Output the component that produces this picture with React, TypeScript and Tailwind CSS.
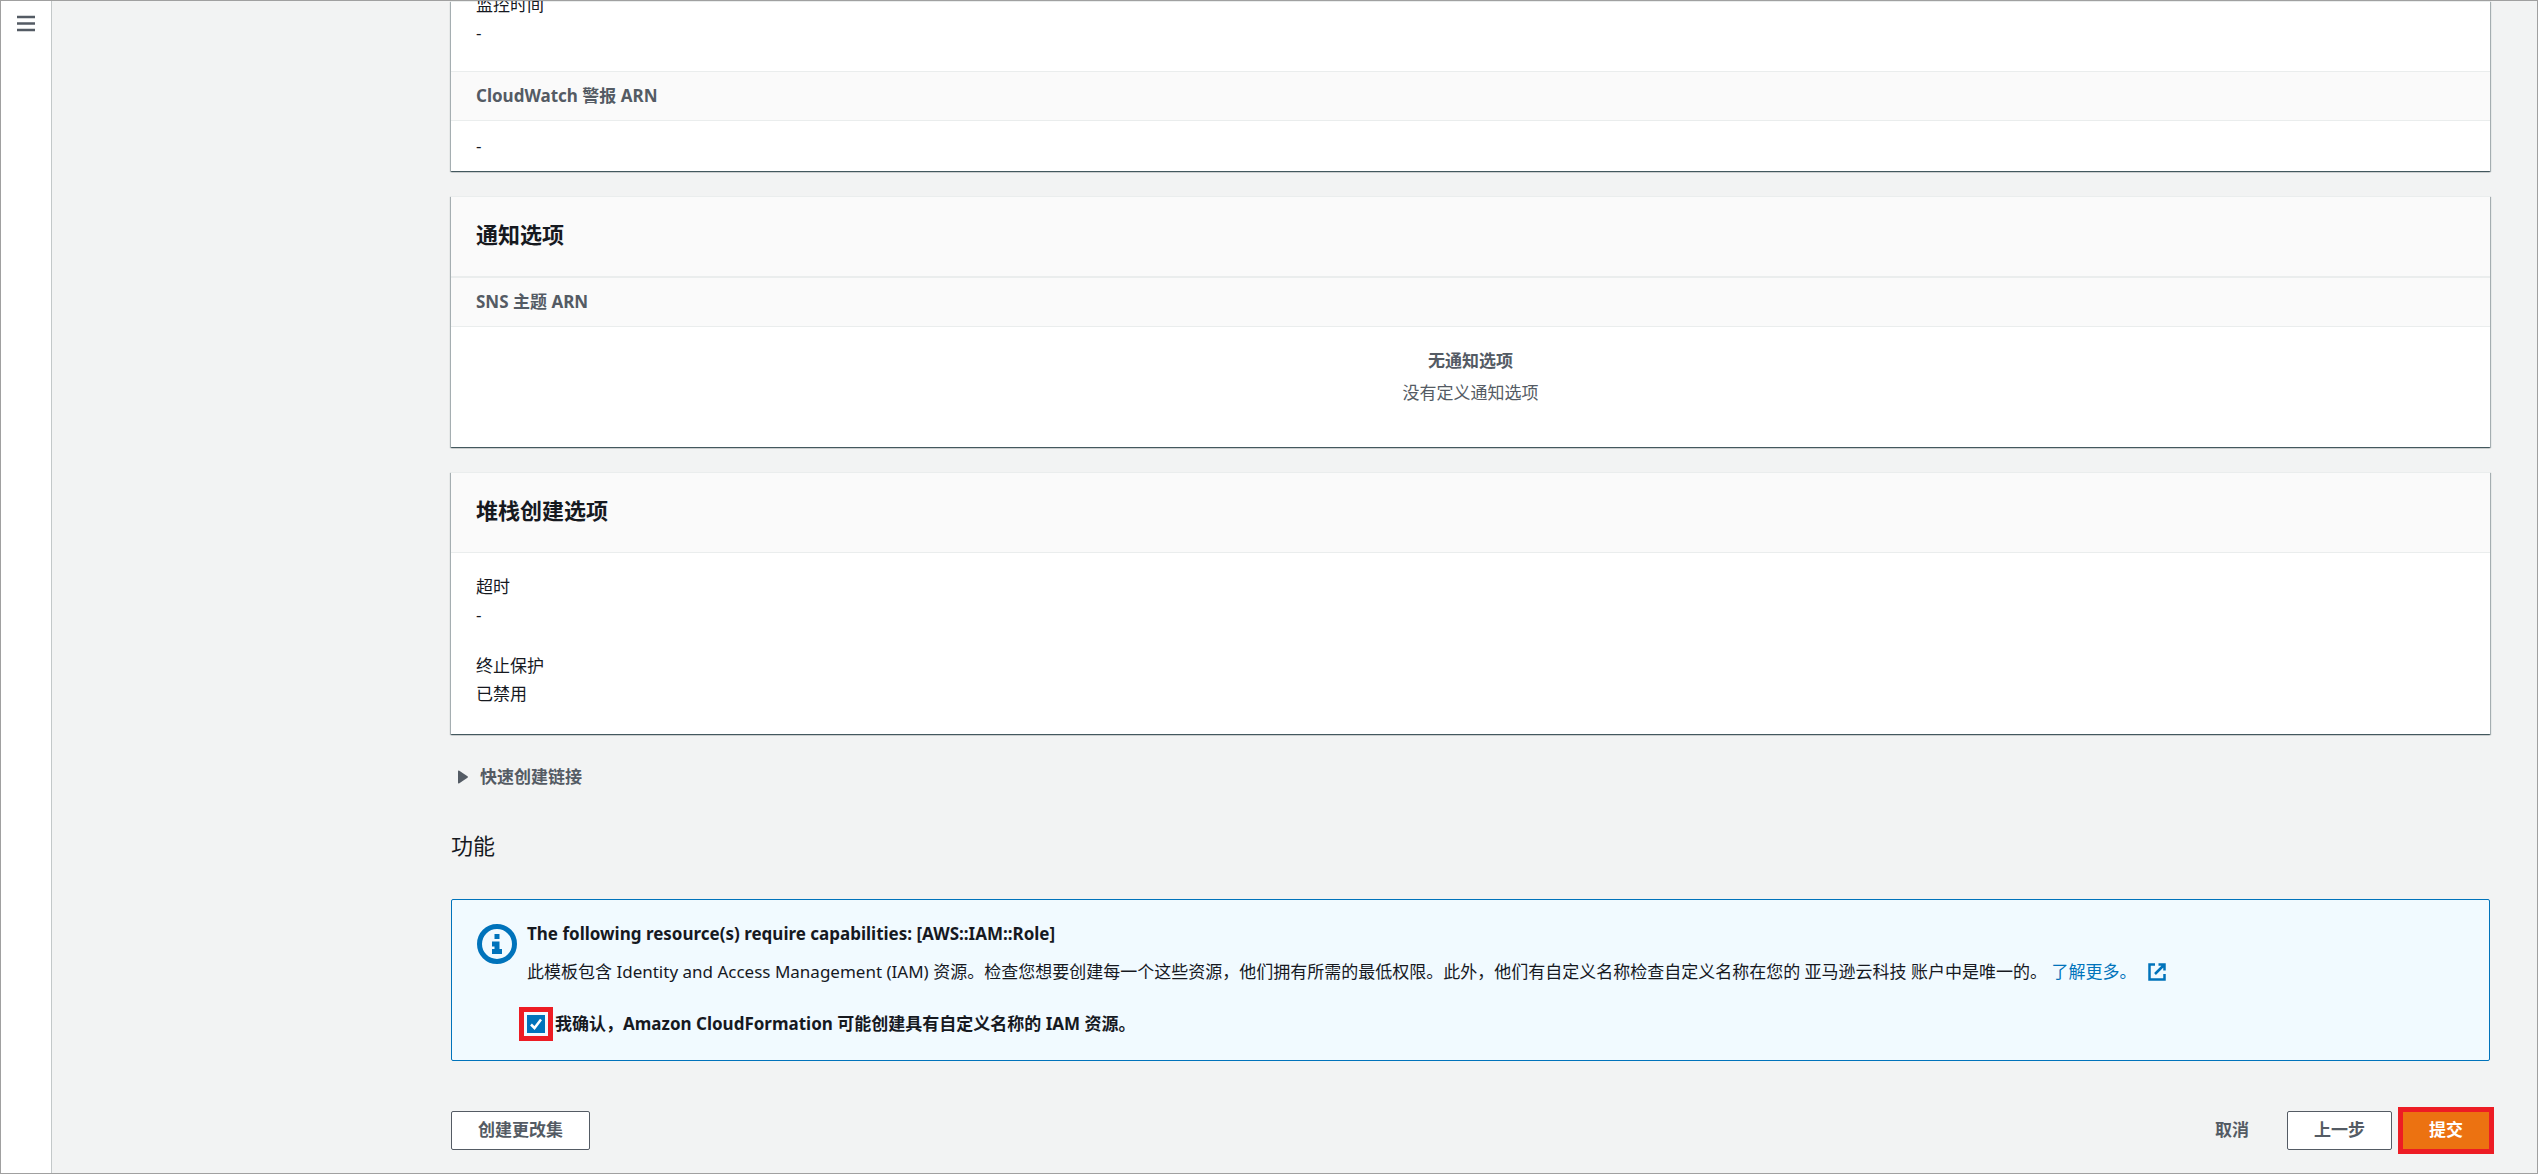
import type { ReactNode } from "react";

function Card({ title, children }: { title?: string; children: ReactNode }) {
  return (
    <section className="mb-[25px] bg-white border-t border-[#eaeded] shadow-[0_1px_1px_0_rgba(0,28,36,0.5),1px_1px_1px_0_rgba(0,28,36,0.25),-1px_1px_1px_0_rgba(0,28,36,0.25)]">
      {title && (
        <h2 className="h-20 px-[25px] pb-1 flex items-center bg-[#fafafa] border-b border-[#eaeded] text-[22px] leading-7 font-bold">
          {title}
        </h2>
      )}
      {children}
    </section>
  );
}

function HeaderCell({ children }: { children: ReactNode }) {
  return (
    <th className="h-[49px] px-[25px] text-left font-bold text-[#545b64] bg-[#fafafa] border-y border-[#eaeded]">
      {children}
    </th>
  );
}

function Field({ label, value }: { label: string; value: string }) {
  return (
    <div>
      <dt>{label}</dt>
      <dd>{value}</dd>
    </div>
  );
}

function InfoIcon() {
  return (
    <svg viewBox="0 0 16 16" className="size-10 shrink-0">
      <circle cx="8" cy="8" r="7" fill="none" stroke="#0073bb" strokeWidth="2" />
      <path d="M7 4h2v2H7zM6 7h3v3h1v2H6v-2h1V9H6z" fill="#0073bb" />
    </svg>
  );
}

function ExternalIcon() {
  return (
    <svg viewBox="0 0 18 18" className="size-[18px] inline-block" fill="none" stroke="#0073bb" strokeWidth="2.5">
      <path d="M7 1.5H1.5v15h15V11" />
      <path d="M10.5 1.5h6v6M16 2L7 11" />
    </svg>
  );
}

export default function App() {
  return (
    <div className="min-h-screen flex overflow-hidden border border-[#a0a0a0] bg-[#f2f3f3] text-[#16191f] text-[17px] leading-7 font-['Noto_Sans','Noto_Sans_CJK_SC',sans-serif]">
      <nav className="w-[51px] shrink-0 bg-white border-r border-[#c3c8c9]">
        <button aria-label="菜单" className="block ml-4 mt-3.5">
          <svg viewBox="0 0 18 18" className="size-[18px]" stroke="#545b64" strokeWidth="2.5">
            <path d="M0 2h18M0 8.5h18M0 15h18" />
          </svg>
        </button>
      </nav>

      <main className="flex-1 min-w-0 pl-[399px] pr-[47px]">
        <Card>
          <dl className="-mt-[11px] px-[25px] pb-6">
            <Field label="监控时间" value="-" />
          </dl>
          <table className="w-full">
            <thead>
              <tr>
                <HeaderCell>CloudWatch 警报 ARN</HeaderCell>
              </tr>
            </thead>
            <tbody>
              <tr>
                <td className="h-[50px] px-[25px]">-</td>
              </tr>
            </tbody>
          </table>
        </Card>

        <Card title="通知选项">
          <table className="w-full">
            <thead>
              <tr>
                <HeaderCell>SNS 主题 ARN</HeaderCell>
              </tr>
            </thead>
            <tbody>
              <tr>
                <td className="pt-5 pb-10 text-center text-[#545b64]">
                  <p className="mb-1 font-bold">无通知选项</p>
                  <p>没有定义通知选项</p>
                </td>
              </tr>
            </tbody>
          </table>
        </Card>

        <Card title="堆栈创建选项">
          <dl className="px-[25px] pt-5 pb-[26px] flex flex-col gap-[23px]">
            <Field label="超时" value="-" />
            <Field label="终止保护" value="已禁用" />
          </dl>
        </Card>

        <button className="pt-1 ml-[7px] flex items-center gap-3 font-bold text-[#545b64]">
          <svg viewBox="0 0 10 14" className="w-2.5 h-3.5" fill="#545b64">
            <path d="M0 1.5Q0 0 1.3.8L9.5 6.3q.8.7 0 1.4L1.3 13.2Q0 14 0 12.5z" />
          </svg>
          快速创建链接
        </button>

        <h2 className="mt-10 text-[22px] leading-7">功能</h2>

        <div className="mt-10 px-[25px] pt-5 pb-[22px] flex gap-2.5 bg-[#f1faff] border border-[#0073bb] rounded-xs">
          <div className="pt-1">
            <InfoIcon />
          </div>
          <div>
            <p className="font-bold">The following resource(s) require capabilities: [AWS::IAM::Role]</p>
            <p className="mt-2.5">
              此模板包含 Identity and Access Management (IAM) 资源。检查您想要创建每一个这些资源，他们拥有所需的最低权限。此外，他们有自定义名称检查自定义名称在您的 亚马逊云科技 账户中是唯一的。{" "}
              <a href="#" className="inline-flex items-center gap-3 text-[#0073bb]">
                了解更多。
                <ExternalIcon />
              </a>
            </p>
            <div className="mt-6 flex items-center gap-2.5">
              <span className="relative flex">
                <input
                  id="ack"
                  type="checkbox"
                  defaultChecked
                  className="size-[18px] appearance-none bg-[#0073bb] outline-5 outline-offset-3 outline-[#ed1c24]"
                />
                <svg viewBox="0 0 18 18" className="absolute inset-0 pointer-events-none" fill="none" stroke="#fff" strokeWidth="2.5">
                  <path d="M4 9.5L7.5 13L14 4.5" />
                </svg>
              </span>
              <label htmlFor="ack" className="font-bold">
                我确认，Amazon CloudFormation 可能创建具有自定义名称的 IAM 资源。
              </label>
            </div>
          </div>
        </div>

        <div className="mt-[50px] mb-5 flex items-center font-bold text-[#545b64]">
          <button className="h-[39px] px-[26px] bg-white border border-[#545b64] rounded-xs">创建更改集</button>
          <button className="ml-auto h-[39px] px-[26px]">取消</button>
          <button className="ml-3 h-[39px] px-[26px] bg-white border border-[#545b64] rounded-xs">上一步</button>
          <button className="ml-2.5 h-[39px] px-[27px] text-white bg-[#ec7211] outline-5 -outline-offset-1 outline-[#ed1c24]">
            提交
          </button>
        </div>
      </main>
    </div>
  );
}
